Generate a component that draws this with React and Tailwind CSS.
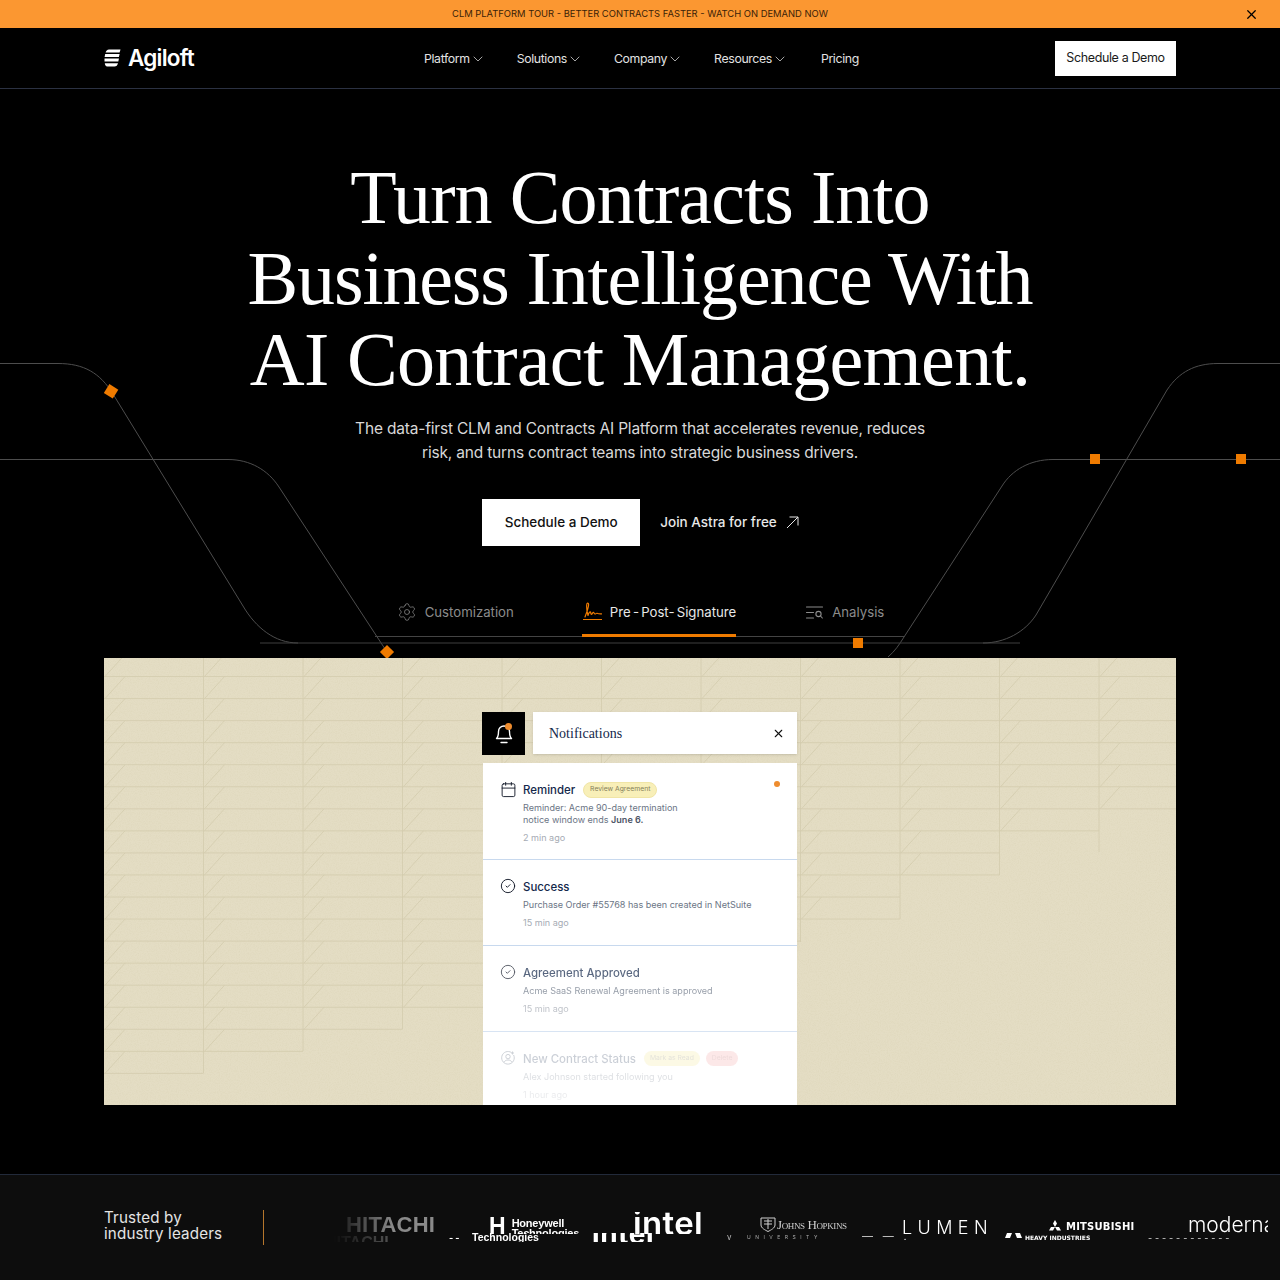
import { Settings, Calendar, CircleCheck, X, ChevronDown } from 'lucide-react'

const navLinks = ['Platform', 'Solutions', 'Company', 'Resources']

// left x of each grid column and how far down it runs
const gridCols = [
    { x: 104, bottom: 1073 },
    { x: 203.5, bottom: 1051 },
    { x: 303, bottom: 1029 },
    { x: 402.5, bottom: 1007 },
    { x: 502, bottom: 1007 },
    { x: 601.5, bottom: 985 },
    { x: 701, bottom: 942 },
    { x: 800.5, bottom: 919 },
    { x: 900, bottom: 875 },
    { x: 999.5, bottom: 852 },
    { x: 1099, bottom: 830 },
]

function GridPattern() {
    const lines = []
    gridCols.forEach((col, i) => {
        const right = i === gridCols.length - 1 ? 1176 : col.x + 99.5
        if (i < gridCols.length - 1) {
            lines.push(<path key={`v${i}`} d={`M${right - 104} 0V${col.bottom - 658}`} />)
        }
        for (let y = 676.5; y <= col.bottom + 0.5; y += 22.05) {
            const top = y - 658
            lines.push(<path key={`h${i}-${y}`} d={`M${col.x - 104} ${top}H${right - 104}`} />)
            lines.push(<path key={`d${i}-${y}`} d={`M${col.x - 104 + 1} ${top}L${col.x - 104 + 21} ${top - 22}`} />)
        }
    })
    return (
        <svg className="absolute inset-0" width="1072" height="447" fill="none">
            <filter id="grain">
                <feTurbulence type="fractalNoise" baseFrequency="0.9" numOctaves="2" seed="4" />
                <feColorMatrix values="0 0 0 0 0.6  0 0 0 0 0.55  0 0 0 0 0.35  0.9 0 0 0 -0.34" />
            </filter>
            <rect width="1072" height="447" filter="url(#grain)" opacity="0.4" />
            <g stroke="#d3cbad" strokeWidth="0.8">{lines}</g>
        </svg>
    )
}

function HeroLines() {
    return (
        <svg className="absolute left-0 top-0 pointer-events-none" width="1280" height="660" fill="none">
            <g stroke="#4d4d4d" strokeWidth="1">
                <path d="M0 363.5H58C84 363.5 100 373 113 394L243 606C256 628 275 643 298 643" />
                <path d="M0 459.5H228C250 459.5 268 470 279 487L387 652" />
                <path d="M1280 363.5H1218C1195 363.5 1179 372 1167 390L1036 615C1025 632 1005 643 983 643" />
                <path d="M1280 459.5H1053C1030 459.5 1012 470 1002 486L904 637C899 645 895 651 888 657" />
                <path d="M260 643H1020" stroke="#3f3f3f" />
            </g>
            <g fill="#ef7b00">
                <rect x="106" y="386" width="10.5" height="10.5" transform="rotate(32 111 391)" />
                <rect x="382" y="647" width="10" height="10" transform="rotate(45 387 652)" />
                <rect x="1090" y="454" width="10" height="10" />
                <rect x="1236" y="454" width="10" height="10" />
                <rect x="853" y="638" width="10" height="10" />
            </g>
        </svg>
    )
}

function LogoMark() {
    return (
        <svg width="17" height="18" viewBox="0 0 17 18" fill="white">
            <path d="M5 0.5H16.5L15.6 3.5H1.6C1.9 2 3.2 0.5 5 0.5Z" />
            <path d="M1.2 5H15.6L14.9 8H0.6Z" />
            <path d="M0.5 9.6H15L14.3 12.6H0.5Z" />
            <path d="M0.8 14.2H14C13.6 16.2 12.2 17.5 10.5 17.5H3.2C1.8 17.5 0.9 16 0.8 14.2Z" />
        </svg>
    )
}

function SignatureIcon() {
    return (
        <svg width="19" height="19" viewBox="0 0 19 19" fill="none" stroke="#ef7b00" strokeWidth="1.2" strokeLinecap="round" strokeLinejoin="round" className="shrink-0">
            <path d="M.5 17.500H18.500" />
            <path d="M2 15C3.500 11 5.800 5 5.600 2.500C5.400 .6 3.800 .8 3.700 3C3.500 6.500 4.300 11 5 13.500C5.600 11 6.800 9.500 7.500 10C8 10.500 7.600 12.500 8.600 12.300C9.500 12 9.600 10 10.500 10.300C11.300 10.600 11 12 12 12C13 12 13 11 14 11.300C15.500 11.800 16.500 12 18.500 11.800" />
        </svg>
    )
}

function AnalysisIcon() {
    return (
        <svg width="17" height="13" viewBox="0 0 17 13" fill="none" stroke="#8c8c8c" strokeWidth="1.1" strokeLinecap="round" className="shrink-0">
            <path d="M.5 1H16.500M.5 6.500H7.500M.5 12H7.500" />
            <circle cx="12.500" cy="8" r="2.600" />
            <path d="M14.500 10L16.300 12" />
        </svg>
    )
}

function BellIcon() {
    return (
        <svg width="18" height="20" viewBox="0 0 18 20" fill="none" stroke="white" strokeWidth="1.4" strokeLinecap="round" strokeLinejoin="round">
            <path d="M1.500 14.500C3 13 3.500 10 3.500 7.500A5.500 5.500 0 0 1 14.500 7.500C14.500 10 15 13 16.500 14.500Z" />
            <path d="M6 18.500H12" />
        </svg>
    )
}

function UserCircleIcon() {
    return (
        <svg width="14" height="14" viewBox="0 0 14 14" fill="none" stroke="#26364f" strokeWidth="1">
            <path d="M10.500 1.600A6.300 6.300 0 1 0 12.600 4" />
            <circle cx="7" cy="5.600" r="2.200" />
            <path d="M3 11.500C3.800 9.600 5.200 9 7 9S10.200 9.600 11 11.500" />
            <path d="M11.500 .5V3.500M10 2H13" />
        </svg>
    )
}

function Notification({ icon, title, badges, children, time, dot, className }) {
    return (
        <div className={`bg-white border-b border-[#c8d9ee] flex gap-[8px] pl-[18px] ${className}`}>
            <div className="pt-[18px] w-[14px] shrink-0">
                <div className="text-[#111827] h-[16px] flex items-center justify-center">{icon}</div>
            </div>
            <div className="flex-1 pt-[17.5px] relative">
                <div className="flex items-center gap-2 h-[18px]">
                    <span className="text-[11.45px] font-medium text-[#14284b] leading-[18px]">{title}</span>
                    {badges}
                </div>
                <div className="text-[9.05px] leading-[12px] text-[#6b7585] mt-[3px]">{children}</div>
                <div className="text-[9.05px] leading-[12px] text-[#a6abb4] mt-[6px]">{time}</div>
                {dot && <span className="absolute right-[17px] top-[18px] w-[6px] h-[6px] rounded-full bg-[#ee8c2e]" />}
            </div>
        </div>
    )
}

// one strip of logos, cut off at the roller seam as in the reference
function LogoStrip() {
    return (
        <div className="relative flex-1 h-[36px] overflow-hidden ml-[59px] [mask-image:linear-gradient(90deg,transparent_10px,black_70px)]">
            <div className="absolute left-0 top-[2px] right-0 h-[22px] overflow-hidden flex text-white">
                <span className="ml-[23px] w-[143px] shrink-0 text-[22px] leading-[26px] font-bold text-[#8a8a8a] font-['Liberation_Sans'] tracking-[0.01em] mt-[0px]">HITACHI</span>
                <div className="w-[144px] shrink-0 flex gap-[6px] mt-[6px]">
                    <span className="text-[23px] leading-[16px] font-bold font-['Liberation_Sans']">H</span>
                    <span className="text-[11px] leading-[10px] font-bold font-['Liberation_Sans'] tracking-[-0.02em]">Honeywell<br />Technologies</span>
                </div>
                <span className="w-[127px] shrink-0 text-[33px] leading-[27px] font-semibold font-['Inter'] tracking-[0.01em] mt-[-2px]">intel</span>
                <div className="w-[142px] shrink-0 flex items-start gap-[1px] mt-[5px]">
                    <svg width="16" height="15" viewBox="0 0 16 15" fill="none" stroke="#d0d0d0" strokeWidth="1" className="shrink-0">
                        <path d="M1 1H15V8C15 11 11 13 8 14.500C5 13 1 11 1 8Z" />
                        <path d="M4 4H12M4 7H12M8 2V12" />
                    </svg>
                    <span className="text-[13px] leading-[15px] text-[#cfcfcf] font-['Liberation_Serif'] tracking-[-0.03em] [font-variant:small-caps]">Johns Hopkins</span>
                </div>
                <span className="w-[146px] shrink-0 text-[18px] leading-[20px] font-['Inter'] font-light tracking-[0.3em] mt-[6px]">LUMEN</span>
                <div className="w-[140px] shrink-0 flex items-start gap-[4px] mt-[8px]">
                    <svg width="14" height="14" viewBox="0 0 14 14" fill="white" className="shrink-0">
                        <path d="M7 0L9 3.500L7 7L5 3.500ZM7 7H11L13 10.500H9ZM7 7H3L1 10.500H5Z" />
                    </svg>
                    <span className="text-[10px] leading-[14px] font-bold font-['DejaVu_Sans'] tracking-[0.02em]">MITSUBISHI</span>
                </div>
                <span className="shrink-0 text-[21px] leading-[21px] font-['Inter'] font-light mt-[2px]">moderna</span>
            </div>
            {/* second copy, only its top sliver shows below the seam */}
            <div className="absolute left-0 top-[23px] right-0 h-[9px] overflow-hidden text-white flex">
                <span className="ml-[2px] w-[124px] shrink-0 text-[16px] leading-[10px] font-bold text-[#555] font-['Liberation_Sans'] mt-[5px]">HITACHI</span>
                <span className="w-[23px] shrink-0 text-[9px] leading-[8px] font-bold mt-[1px]">- -</span>
                <span className="w-[120px] shrink-0 text-[10.5px] leading-[9px] font-semibold font-['Liberation_Sans']">Technologies</span>
                <span className="w-[135px] shrink-0 text-[28px] leading-[12px] font-bold font-['Inter'] tracking-[0.02em] mt-[-5px]">intel</span>
                <span className="w-[20px] shrink-0 text-[8px] leading-[8px] text-[#bbb]">v</span>
                <span className="w-[115px] shrink-0 text-[5px] leading-[8px] text-[#aaa] tracking-[0.9em]">UNIVERSITY</span>
                <span className="w-[143px] shrink-0 text-[11px] leading-[6px] tracking-[0.3em] font-light">— — .</span>
                <div className="w-[143px] shrink-0 flex gap-[3px] items-start">
                    <svg width="17" height="6" viewBox="0 0 17 6" fill="white" className="shrink-0">
                        <path d="M2 0H7L5 5H0ZM10 0H15L17 5H12Z" />
                    </svg>
                    <span className="text-[6px] leading-[9px] font-bold font-['DejaVu_Sans']">HEAVY INDUSTRIES</span>
                </div>
                <span className="shrink-0 text-[9px] leading-[9px] tracking-[0.02em] text-[#ddd]">- - - - - - - - - - - -</span>
            </div>
        </div>
    )
}

export default function App() {
    return (
        <div className="relative w-[1280px] h-[1280px] overflow-hidden bg-black font-['Inter',sans-serif]">
            <HeroLines />

            {/* announcement bar */}
            <div className="relative h-7 bg-[#fb9731] flex items-center justify-center text-[9.4px] text-[#3a2208]">
                CLM PLATFORM TOUR - BETTER CONTRACTS FASTER - WATCH ON DEMAND NOW
                <X className="absolute right-[21px] top-[6.5px] text-black" size={15} strokeWidth={2} />
            </div>

            {/* nav */}
            <nav className="relative h-[61px] border-b border-[#2b3142] flex items-center pl-[104px] pr-[104px]">
                <div className="flex items-center gap-[7px] w-[320px]">
                    <LogoMark />
                    <span className="text-white text-[22.5px] font-semibold tracking-[-0.035em] leading-none">Agiloft</span>
                </div>
                <div className="flex items-center gap-[31px] text-[12.3px] tracking-[-0.03em] text-[#e2e2e2] pt-[2px]">
                    {navLinks.map((link) => (
                        <span key={link} className="flex items-center">
                            {link}
                            <ChevronDown size={16} strokeWidth={1.1} />
                        </span>
                    ))}
                    <span className="ml-[2px]">Pricing</span>
                </div>
                <button className="ml-auto w-[121px] h-[35px] bg-white text-[12.5px] tracking-[-0.03em] text-[#1a1a1a]">Schedule a Demo</button>
            </nav>

            {/* hero */}
            <div className="relative flex flex-col items-center">
                <h1 className="mt-[68px] text-white text-center text-[76px] leading-[81px] font-normal font-['Liberation_Serif',serif]">
                    <span className="block tracking-[-0.012em]">Turn Contracts Into</span>
                    <span className="block tracking-[-0.015em]">Business Intelligence With</span>
                    <span className="block tracking-[-0.0086em]">AI Contract Management.</span>
                </h1>
                <p className="mt-[17px] text-center text-[15.5px] tracking-[-0.012em] leading-[24px] text-[#d8d8d8]">
                    The data-first CLM and Contracts AI Platform that accelerates revenue, reduces<br />
                    risk, and turns contract teams into strategic business drivers.
                </p>
                <div className="mt-[34px] ml-[1px] flex items-center">
                    <button className="w-[158px] h-[47px] bg-white text-[13.5px] font-medium text-[#111]">Schedule a Demo</button>
                    <span className="ml-[20px] text-[13.5px] font-medium text-[#e8e8e8]">Join Astra for free</span>
                    <svg width="13" height="13" viewBox="0 0 13 13" fill="none" stroke="#e8e8e8" strokeWidth="1" className="ml-[9px]">
                        <path d="M1 12L12 1M3.500 1H12V9.500" />
                    </svg>
                </div>
                <div className="mt-[56px] flex gap-[68px] pl-[22px] pr-[21px] border-b border-[#444] text-[13.2px] leading-[20px]">
                    <div className="flex gap-[8px] pb-[14px] text-[#8c8c8c]">
                        <Settings size={20} strokeWidth={0.9} />
                        Customization
                    </div>
                    <div className="flex gap-[8px] pb-[11px] pl-[1px] border-b-[3px] border-[#ef7b00] text-[#e8e8e8] mb-[-1px] [word-spacing:-1.5px]">
                        <SignatureIcon />
                        Pre - Post- Signature
                    </div>
                    <div className="flex items-start gap-[9px] ml-[2px] pb-[14px] text-[#8c8c8c]">
                        <span className="mt-[4px]"><AnalysisIcon /></span>
                        Analysis
                    </div>
                </div>

                {/* product panel */}
                <div className="relative mt-[21px] w-[1072px] h-[447px] bg-[#e4ddc4] overflow-hidden">
                    <GridPattern />
                    <div className="relative w-[315px] ml-[378px] pt-[54px]">
                        <div className="flex gap-2">
                            <div className="relative w-[43px] h-[43px] bg-black flex items-center justify-center">
                                <BellIcon />
                                <span className="absolute left-[23px] top-[11px] w-[7px] h-[7px] rounded-full bg-[#ee8c2e]" />
                            </div>
                            <div className="flex-1 h-[42px] bg-white flex items-center justify-between pl-4 pr-[12px] shadow-sm">
                                <span className="font-['Liberation_Serif',serif] text-[14px] text-[#14284b]">Notifications</span>
                                <X size={13} strokeWidth={2} className="text-[#111]" />
                            </div>
                        </div>
                        <div className="mt-2 ml-[1px]">
                            <Notification
                                className="h-[97px]"
                                icon={<Calendar size={17} strokeWidth={1.3} className="shrink-0" />}
                                title="Reminder"
                                dot
                                time="2 min ago"
                                badges={
                                    <span className="rounded-full bg-[#f8efb8] border border-[#f0e5a6] h-[16px] px-[6px] flex items-center text-[6.8px] text-[#85805a]">Review Agreement</span>
                                }
                            >
                                Reminder: Acme 90-day termination<br />
                                notice window ends <span className="font-semibold text-[#4d5565]">June 6.</span>
                            </Notification>
                            <Notification
                                className="h-[86px]"
                                icon={<CircleCheck size={16} strokeWidth={1.4} className="shrink-0" />}
                                title="Success"
                                time="15 min ago"
                            >
                                Purchase Order #55768 has been created in NetSuite
                            </Notification>
                            <div className="bg-white">
                                <Notification
                                    className="h-[86px] opacity-70"
                                    icon={<CircleCheck size={16} strokeWidth={1.4} className="shrink-0" />}
                                    title="Agreement Approved"
                                    time="15 min ago"
                                >
                                    Acme SaaS Renewal Agreement is approved
                                </Notification>
                            </div>
                            <div className="bg-white h-[80px]">
                                <Notification
                                    className="h-[86px] opacity-[0.22] border-b-0"
                                    icon={<UserCircleIcon />}
                                    title="New Contract Status"
                                    time="1 hour ago"
                                    badges={
                                        <span className="flex gap-[6px]">
                                            <span className="rounded-full bg-[#f3e58c] h-[15px] px-[6px] flex items-center text-[6.8px] text-[#85805a]">Mark as Read</span>
                                            <span className="rounded-full bg-[#f59a9a] h-[15px] px-[6px] flex items-center text-[6.8px] text-[#b05a5a]">Delete</span>
                                        </span>
                                    }
                                >
                                    Alex Johnson started following you
                                </Notification>
                            </div>
                        </div>
                    </div>
                </div>
            </div>

            {/* trusted by */}
            <footer className="relative mt-[69px] h-[106px] bg-[#0d0d0d] border-t border-[#222a3a] flex items-center pl-[104px] pr-[12px]">
                <div className="text-[15.2px] leading-[15.5px] text-[#e4e4e4] tracking-[0.01em] w-[160px] border-r border-[#b5762c] h-[35px] flex items-center">
                    <span className="mt-[-4px]">Trusted by<br />industry leaders</span>
                </div>
                <LogoStrip />
            </footer>
        </div>
    )
}
